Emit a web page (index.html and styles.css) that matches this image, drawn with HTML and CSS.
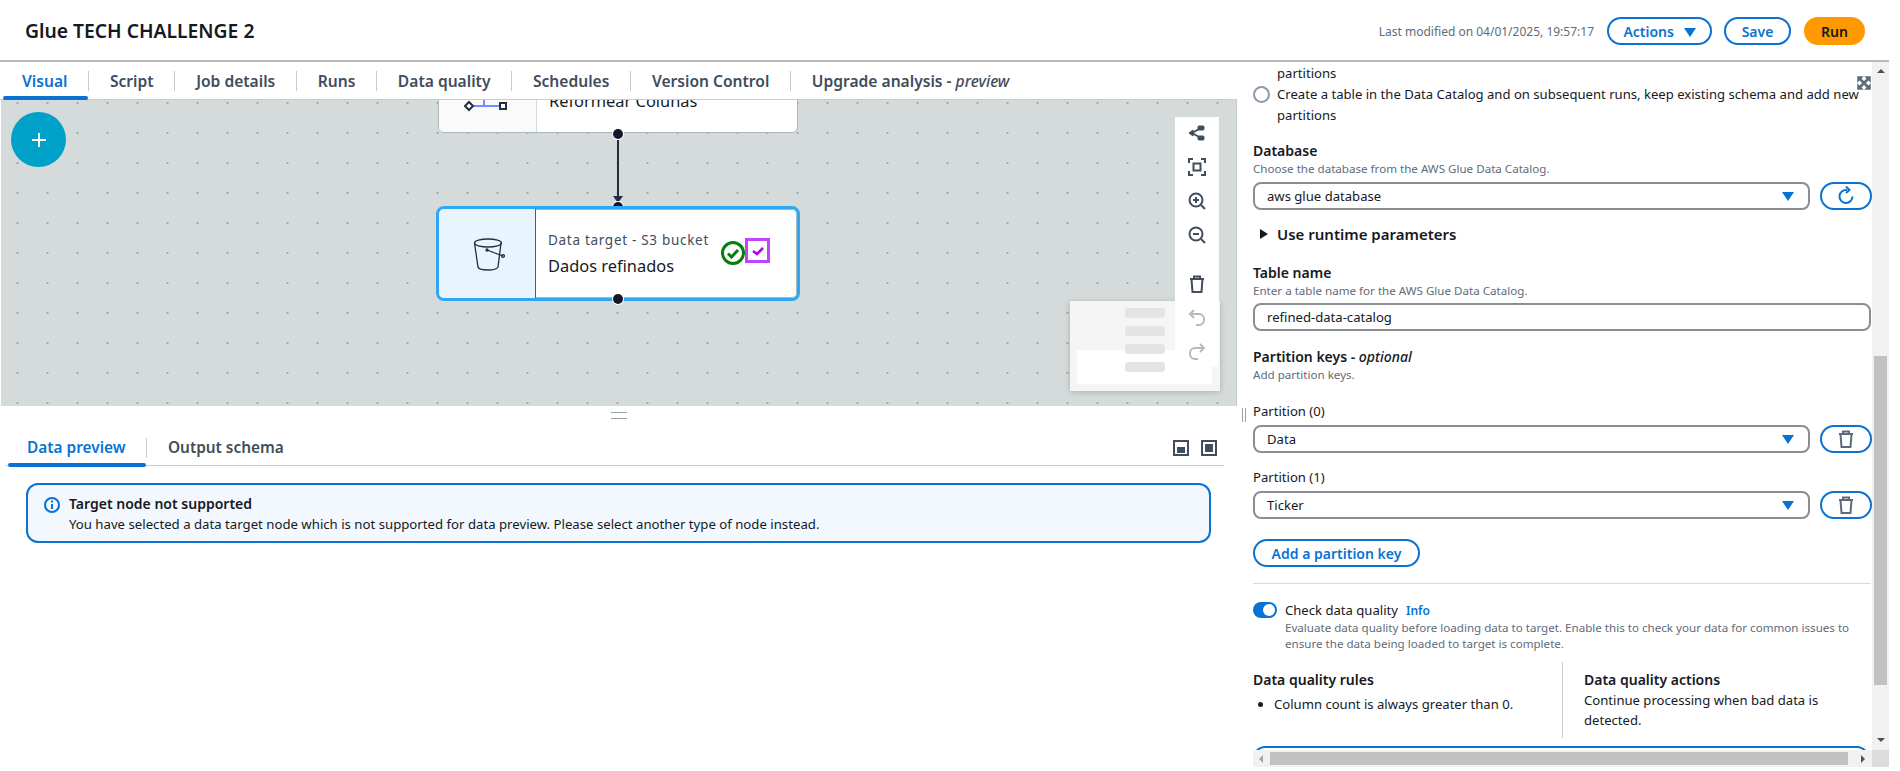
FILE: index.html
```html
<!DOCTYPE html>
<html lang="en">
<head>
    <meta charset="UTF-8">
    <title>Glue TECH CHALLENGE 2</title>
    <link rel="stylesheet" href="styles.css">
</head>
<body>
    <header class="topbar">
        <h1 class="job-title">Glue TECH CHALLENGE 2</h1>
        <div class="top-actions">
            <span class="modified">Last modified on 04/01/2025, 19:57:17</span>
            <button class="btn btn-actions">Actions <span class="caret-down"></span></button>
            <button class="btn btn-save">Save</button>
            <button class="btn btn-run">Run</button>
        </div>
    </header>

    <main class="workspace">
        <section class="left">
            <nav class="tabs">
                <a class="tab active">Visual</a>
                <a class="tab">Script</a>
                <a class="tab">Job details</a>
                <a class="tab">Runs</a>
                <a class="tab">Data quality</a>
                <a class="tab">Schedules</a>
                <a class="tab">Version Control</a>
                <a class="tab last">Upgrade analysis - <em>preview</em></a>
            </nav>

            <div class="canvas">
                <button class="add-node">
                    <svg width="20" height="20" viewBox="0 0 20 20"><path d="M10 3v14M3 10h14" stroke="#fff" stroke-width="2"/></svg>
                </button>

                <div class="node node-prev">
                    <div class="node-icon">
                        <svg width="44" height="20" viewBox="0 0 44 20"><path d="M8 11h30M20 5v6" stroke="#6f8fff" stroke-width="2" fill="none"/><path d="M5 7l4 4-4 4-4-4z" fill="#fff" stroke="#232f3e" stroke-width="2"/><rect x="36" y="8" width="6" height="6" fill="#fff" stroke="#232f3e" stroke-width="2"/></svg>
                    </div>
                    <div class="node-text"><div class="node-name">Reformear Colunas</div></div>
                </div>
                <span class="port port-a"></span>
                <svg class="edge" width="12" height="64" viewBox="0 0 12 64"><path d="M6 0v56" stroke="#232f3e" stroke-width="2"/><path d="M1 56h10l-5 7z" fill="#232f3e"/></svg>
                <span class="port port-c"></span>

                <div class="node node-selected">
                    <div class="node-icon">
                        <svg class="bucket" width="32" height="34" viewBox="0 0 32 34" fill="none" stroke="#232f3e" stroke-width="1.3"><ellipse cx="15" cy="6" rx="13.5" ry="4"/><path d="M1.5 6l3.5 24c.5 2 4 3 10 3s9-1 10-3l3-24"/><path d="M14 13l16 6" /><circle cx="14" cy="13" r="1"/><circle cx="30" cy="19" r="1.4"/></svg>
                    </div>
                    <div class="node-text">
                        <div class="node-type">Data target - S3 bucket</div>
                        <div class="node-name">Dados refinados</div>
                    </div>
                    <svg class="node-ok" width="26" height="26" viewBox="0 0 26 26" fill="none" stroke="#037f0c"><circle cx="13" cy="13" r="10.5" stroke-width="3"/><path d="M8 13.5l3.5 3.5 6.5-7" stroke-width="3"/></svg>
                    <span class="node-dq">
                        <svg width="14" height="12" viewBox="0 0 14 12" fill="none"><path d="M2 6l4 3 6-6" stroke="#b600f5" stroke-width="2.6"/></svg>
                    </span>
                </div>
                <span class="port port-b"></span>

                <div class="minimap">
                    <div class="minimap-view"></div>
                    <span class="mini-bar bar-1"></span>
                    <span class="mini-bar bar-2"></span>
                    <span class="mini-bar bar-3"></span>
                    <span class="mini-bar bar-4"></span>
                </div>

                <div class="tools">
                    <svg width="18" height="18" viewBox="0 0 18 18" fill="#414d5c" stroke="#414d5c"><path d="M4 9l9-5M4 9l9 5" stroke-width="2"/><path d="M1 9l4-3v6z"/><rect x="10" y="2" width="6" height="4" rx="1"/><rect x="10" y="12" width="6" height="4" rx="1"/></svg>
                    <svg width="18" height="18" viewBox="0 0 18 18" fill="none" stroke="#414d5c" stroke-width="2"><path d="M1 5V1h4M13 1h4v4M17 13v4h-4M5 17H1v-4"/><rect x="5.500" y="5.500" width="7" height="7"/></svg>
                    <svg width="18" height="18" viewBox="0 0 18 18" fill="none" stroke="#414d5c" stroke-width="2"><circle cx="8" cy="8" r="6.500"/><path d="M13 13l4 4M5 8h6M8 5v6"/></svg>
                    <svg width="18" height="18" viewBox="0 0 18 18" fill="none" stroke="#414d5c" stroke-width="2"><circle cx="8" cy="8" r="6.500"/><path d="M13 13l4 4M5 8h6"/></svg>
                    <svg class="tool-gap" width="18" height="18" viewBox="0 0 18 18" fill="none" stroke="#414d5c" stroke-width="2"><path d="M2 4h14M6 4V1.500h6V4M3.500 4l1 13h9l1-13"/></svg>
                    <svg width="18" height="18" viewBox="0 0 18 18" fill="none" stroke="#b4b9c0" stroke-width="2"><path d="M6 1L2 5l4 4M2 5h9a5 5 0 0 1 5 5v1a5 5 0 0 1-5 5H8"/></svg>
                    <svg width="18" height="18" viewBox="0 0 18 18" fill="none" stroke="#b4b9c0" stroke-width="2"><path d="M12 1l4 4-4 4M16 5H7a5 5 0 0 0-5 5v1a5 5 0 0 0 5 5h3"/></svg>
                </div>
            </div>

            <div class="resize-h"></div>

            <div class="preview">
                <div class="preview-tabs">
                    <a class="tab active">Data preview</a>
                    <a class="tab last">Output schema</a>
                    <div class="panel-btns">
                        <span class="panel-btn"><span class="fill-bottom"></span></span>
                        <span class="panel-btn"><span class="fill-full"></span></span>
                    </div>
                </div>
                <div class="alert">
                    <svg width="16" height="16" viewBox="0 0 16 16" fill="none" stroke="#0972d3" stroke-width="2"><circle cx="8" cy="8" r="7"/><path d="M8 7v5M8 3.500v2"/></svg>
                    <div>
                        <div class="alert-title">Target node not supported</div>
                        <div class="alert-body">You have selected a data target node which is not supported for data preview. Please select another type of node instead.</div>
                    </div>
                </div>
            </div>
        </section>

        <aside class="right">
            <span class="resize-v"></span>
            <div class="props">
                <svg class="expand" width="14" height="14" viewBox="0 0 14 14" fill="#5f6b7a" stroke="#5f6b7a" stroke-width="1.500"><path d="M1 5V1h4zM9 1h4v4zM13 9v4H9zM5 13H1V9z"/><path d="M3 3l8 8M11 3l-8 8" fill="none" stroke-width="2.500"/></svg>
                <div class="props-body">
                    <div class="radio-text first-line">partitions</div>
                    <label class="radio-row">
                        <span class="radio"></span>
                        <span class="radio-text">Create a table in the Data Catalog and on subsequent runs, keep existing schema and add new partitions</span>
                    </label>

                    <div class="label mt-15">Database</div>
                    <div class="desc">Choose the database from the AWS Glue Data Catalog.</div>
                    <div class="field-row mt-5">
                        <div class="select">aws glue database<span class="select-caret"></span></div>
                        <button class="icon-btn">
                            <svg width="20" height="20" viewBox="0 0 20 20" fill="none" stroke="#0972d3" stroke-width="2"><path d="M16.500 10.500A6.500 6.500 0 1 1 11 4M10 0.500l3.500 3.500-3.500 3" /></svg>
                        </button>
                    </div>

                    <div class="expander"><span class="caret-right"></span>Use runtime parameters</div>

                    <div class="label mt-19">Table name</div>
                    <div class="desc">Enter a table name for the AWS Glue Data Catalog.</div>
                    <div class="input mt-4">refined-data-catalog</div>

                    <div class="label mt-16">Partition keys - <em>optional</em></div>
                    <div class="desc">Add partition keys.</div>

                    <div class="sub-label mt-18">Partition (0)</div>
                    <div class="field-row mt-4">
                        <div class="select">Data<span class="select-caret"></span></div>
                        <button class="icon-btn">
                            <svg width="18" height="18" viewBox="0 0 18 18" fill="none" stroke="#5f6b7a" stroke-width="2"><path d="M2 4h14M6 4V1.500h6V4M3.500 4l1 13h9l1-13"/></svg>
                        </button>
                    </div>
                    <div class="sub-label mt-14">Partition (1)</div>
                    <div class="field-row mt-4">
                        <div class="select">Ticker<span class="select-caret"></span></div>
                        <button class="icon-btn">
                            <svg width="18" height="18" viewBox="0 0 18 18" fill="none" stroke="#5f6b7a" stroke-width="2"><path d="M2 4h14M6 4V1.500h6V4M3.500 4l1 13h9l1-13"/></svg>
                        </button>
                    </div>
                    <button class="btn btn-add">Add a partition key</button>

                    <hr class="divider">

                    <div class="toggle-row">
                        <span class="toggle"></span>
                        <span class="toggle-label">Check data quality</span>
                        <a class="info">Info</a>
                    </div>
                    <div class="desc toggle-desc">Evaluate data quality before loading data to target. Enable this to check your data for common issues to ensure the data being loaded to target is complete.</div>

                    <div class="dq-cols">
                        <div class="dq-col">
                            <div class="label">Data quality rules</div>
                            <ul class="dq-list"><li>Column count is always greater than 0.</li></ul>
                        </div>
                        <div class="dq-col dq-actions">
                            <div class="label">Data quality actions</div>
                            <div class="dq-text">Continue processing when bad data is detected.</div>
                        </div>
                    </div>
                    <div class="cut-box"></div>
                </div>
                <div class="hbar">
                    <span class="arrow-left"></span>
                    <span class="hthumb"></span>
                    <span class="arrow-right"></span>
                </div>
            </div>
            <div class="vbar">
                <span class="arrow-up"></span>
                <span class="vthumb"></span>
                <span class="arrow-down"></span>
                <span class="corner"></span>
            </div>
        </aside>
    </main>
</body>
</html>
```

FILE: styles.css
```css
* {
    box-sizing: border-box;
}
body {
    margin: 0;
    width: 1889px;
    height: 767px;
    font-family: "Noto Sans", sans-serif;
    font-size: 14px;
    color: #16191f;
    background-color: #ffffff;
    overflow: hidden;
    display: flex;
    flex-direction: column;
}
.topbar {
    height: 62px;
    flex: none;
    display: flex;
    align-items: center;
    justify-content: space-between;
    padding: 0 24px 0 25px;
    border-bottom: 2px solid #b4bcbc;
}
.job-title {
    margin: 0;
    font-size: 19.300px;
    font-weight: 600;
    color: #16191f;
}
.top-actions {
    display: flex;
    align-items: center;
    margin-top: 2px;
}
.modified {
    font-size: 12px;
    color: #5f6b7a;
    margin-right: 13px;
}
.btn {
    font-family: inherit;
    font-size: 14px;
    font-weight: 600;
    height: 28px;
    padding: 0;
    border: 2px solid #0972d3;
    border-radius: 14px;
    background-color: #ffffff;
    color: #0972d3;
}
.btn-actions {
    width: 105px;
}
.caret-down {
    display: inline-block;
    margin-left: 6px;
    border-left: 6px solid transparent;
    border-right: 6px solid transparent;
    border-top: 9px solid #0972d3;
}
.btn-save {
    width: 67px;
    margin-left: 12px;
}
.btn-run {
    width: 61px;
    margin-left: 13px;
    background-color: #ff9900;
    border-color: #ff9900;
    color: #16191f;
}
.workspace {
    flex: 1;
    min-height: 0;
    display: flex;
}
.left {
    width: 1237px;
    flex: none;
    display: flex;
    flex-direction: column;
}
.tabs {
    height: 38px;
    flex: none;
    display: flex;
    align-items: center;
    padding: 0 0 0 3px;
    border-bottom: 1px solid #c6cbd0;
    background-color: #ffffff;
    position: relative;
}
.tab {
    font-size: 15.600px;
    font-weight: 600;
    color: #414d5c;
    padding: 0 20.500px 0 21px;
    height: 20px;
    line-height: 20px;
    border-right: 1px solid #c6cbd0;
    position: relative;
}
.tab:first-child {
    padding-left: 19px;
}
.tab.last {
    border-right: none;
}
.tab em {
    font-weight: 500;
}
.tab.active {
    color: #0972d3;
}
.tab.active::after {
    content: "";
    position: absolute;
    left: 0;
    right: 0;
    top: 25px;
    height: 4px;
    background-color: #0972d3;
    border-radius: 2px;
}
.canvas {
    height: 306px;
    flex: none;
    position: relative;
    overflow: hidden;
    margin-left: 1px;
    background-color: #d5dbdb;
    background-image: radial-gradient(circle, #a3adad 0.8px, transparent 1.100px);
    background-size: 30px 30px;
    background-position: 1.500px -12px;
    border-right: 1px solid #c6cbd0;
}
.add-node {
    position: absolute;
    left: 10px;
    top: 12px;
    width: 55px;
    height: 55px;
    border: none;
    border-radius: 50%;
    background-color: #00a1c9;
    display: flex;
    align-items: center;
    justify-content: center;
}
.node {
    position: absolute;
    display: flex;
    background-color: #ffffff;
    overflow: hidden;
}
.node-prev {
    left: 437px;
    top: -60px;
    width: 360px;
    height: 93px;
    border: 1px solid #aab7b8;
    border-radius: 6px;
}
.node-selected {
    left: 435px;
    top: 106px;
    width: 364px;
    height: 95px;
    border: 3px solid #2ea7f5;
    border-radius: 8px;
    align-items: center;
    box-shadow: inset 0 0 0 1px #aab7b8;
}
.node-icon {
    width: 97px;
    align-self: stretch;
    flex: none;
    display: flex;
    align-items: center;
    justify-content: center;
    background-color: #fafafa;
    border-right: 1px solid #d5dbdb;
}
.node-prev .node-icon {
    width: 98px;
    align-items: flex-start;
    padding-top: 54px;
    padding-right: 4px;
}
.node-selected .node-icon {
    background-color: #e8f5fe;
    border-right-color: #0073bb;
}
.bucket {
    margin-left: 3px;
}
.node-text {
    padding-left: 12px;
}
.node-prev .node-text {
    padding-top: 49px;
}
.node-type {
    font-size: 13.500px;
    letter-spacing: 0.700px;
    color: #414d5c;
    line-height: 18px;
}
.node-name {
    font-size: 16.400px;
    line-height: 22px;
    color: #16191f;
}
.node-selected .node-name {
    margin-top: 6px;
}
.node-ok {
    position: absolute;
    left: 281px;
    top: 31px;
}
.node-dq {
    position: absolute;
    left: 306px;
    top: 29px;
    width: 25px;
    height: 25px;
    border: 3px solid #c142ff;
    display: flex;
    align-items: center;
    justify-content: center;
}
.port {
    position: absolute;
    left: 612px;
    width: 10px;
    height: 10px;
    border-radius: 50%;
    background-color: #16162d;
    box-shadow: 0 0 0 1px #ffffff;
}
.port-a {
    top: 29px;
}
.port-b {
    top: 194px;
}
.port-c {
    top: 102px;
}
.edge {
    position: absolute;
    left: 611px;
    top: 40px;
}
.minimap {
    position: absolute;
    left: 1069px;
    top: 201px;
    width: 150px;
    height: 90px;
    background-color: #f5f5f5;
    box-shadow: 0 1px 6px rgba(0, 0, 0, 0.2);
}
.minimap-view {
    position: absolute;
    left: 7px;
    top: 49px;
    width: 135px;
    height: 34px;
    background-color: #ffffff;
}
.mini-bar {
    position: absolute;
    left: 55px;
    width: 40px;
    height: 10px;
    border-radius: 3px;
    background-color: #e4e4e4;
}
.bar-1 { top: 7px; }
.bar-2 { top: 25px; }
.bar-3 { top: 43px; }
.bar-4 { top: 61px; }
.tools {
    position: absolute;
    left: 1174px;
    top: 17px;
    width: 44px;
    height: 250px;
    background-color: #ffffff;
    display: flex;
    flex-direction: column;
    align-items: center;
    padding-top: 7px;
    gap: 16px;
}
.tool-gap {
    margin-top: 15px;
}
.resize-h {
    position: relative;
    height: 24px;
    flex: none;
}
.resize-h::after {
    content: "";
    position: absolute;
    left: 611px;
    top: 6px;
    width: 16px;
    height: 5px;
    border-top: 1px solid #9aa3a3;
    border-bottom: 1px solid #9aa3a3;
}
.preview {
    padding: 0 13px 0 6px;
    flex: 1;
}
.preview-tabs {
    display: flex;
    align-items: center;
    height: 36px;
    padding: 0 0 0 2px;
    border-bottom: 1px solid #c6cbd0;
}
.preview-tabs .tab {
    font-size: 15.400px;
}
.panel-btns {
    margin-left: auto;
    display: flex;
    gap: 12px;
    padding-right: 7px;
}
.panel-btn {
    width: 16px;
    height: 16px;
    border: 2px solid #414d5c;
    position: relative;
    display: block;
}
.fill-bottom {
    position: absolute;
    left: 2px;
    right: 2px;
    bottom: 1px;
    height: 6px;
    background-color: #414d5c;
}
.fill-full {
    position: absolute;
    left: 2px;
    right: 2px;
    top: 2px;
    bottom: 2px;
    background-color: #414d5c;
}
.alert {
    margin: 17px 0 0 20px;
    width: 1185px;
    height: 60px;
    border: 2px solid #0972d3;
    border-radius: 12px;
    background-color: #f2f8fd;
    display: flex;
    gap: 9px;
    padding: 9px 16px;
}
.alert svg {
    margin-top: 3px;
    flex: none;
}
.alert-title {
    font-size: 14px;
    font-weight: 600;
    line-height: 20px;
    color: #16191f;
}
.alert-body {
    font-size: 13.200px;
    line-height: 20px;
    color: #16191f;
}
.right {
    flex: 1;
    min-width: 0;
    display: flex;
    position: relative;
}
.resize-v {
    position: absolute;
    left: 5px;
    top: 346px;
    width: 4px;
    height: 14px;
    border-left: 1px solid #9aa3a3;
    border-right: 1px solid #9aa3a3;
}
.props {
    flex: 1;
    min-width: 0;
    display: flex;
    flex-direction: column;
    position: relative;
}
.expand {
    position: absolute;
    right: 1px;
    top: 14px;
}
.props-body {
    flex: 1;
    min-height: 0;
    overflow: hidden;
    padding: 1px 0 0 16px;
}
.first-line {
    margin-left: 24px;
}
.radio-row {
    display: flex;
    align-items: flex-start;
    gap: 7px;
    margin-right: 4px;
}
.radio {
    width: 17px;
    height: 17px;
    margin-top: 2px;
    flex: none;
    border: 2px solid #8d99a8;
    border-radius: 50%;
}
.radio-text {
    font-size: 13.100px;
    line-height: 21px;
    color: #16191f;
}
.label {
    font-size: 14px;
    font-weight: 600;
    line-height: 20px;
    color: #16191f;
}
.label em {
    font-weight: 500;
}
.sub-label {
    font-size: 13.100px;
    line-height: 20px;
    color: #16191f;
}
.desc {
    font-size: 11.600px;
    line-height: 16px;
    color: #5f6b7a;
}
.mt-4 { margin-top: 4px; }
.mt-5 { margin-top: 5px; }
.mt-14 { margin-top: 14px; }
.mt-15 { margin-top: 15px; }
.mt-16 { margin-top: 16px; }
.mt-18 { margin-top: 18px; }
.mt-19 { margin-top: 19px; }
.field-row {
    display: flex;
    gap: 10px;
}
.select, .input {
    height: 28px;
    line-height: 24px;
    border: 2px solid #8c8c94;
    border-radius: 8px;
    padding: 0 12px;
    font-size: 13.100px;
    color: #16191f;
    background-color: #ffffff;
}
.select {
    width: 557px;
    position: relative;
}
.input {
    width: 618px;
}
.select-caret {
    position: absolute;
    right: 14px;
    top: 8px;
    border-left: 6px solid transparent;
    border-right: 6px solid transparent;
    border-top: 9px solid #0972d3;
}
.icon-btn {
    width: 52px;
    height: 28px;
    padding: 0;
    border: 2px solid #0972d3;
    border-radius: 14px;
    background-color: #ffffff;
    display: flex;
    align-items: center;
    justify-content: center;
}
.expander {
    margin-top: 14px;
    font-size: 15px;
    font-weight: 600;
    line-height: 20px;
    display: flex;
    align-items: center;
    padding-left: 7px;
}
.caret-right {
    margin-right: 9px;
    border-top: 5px solid transparent;
    border-bottom: 5px solid transparent;
    border-left: 8px solid #16191f;
}
.btn-add {
    display: block;
    width: 167px;
    margin-top: 20px;
    font-size: 14px;
}
.divider {
    margin: 16px 0 0;
    width: 618px;
    border: none;
    border-top: 1px solid #d5dbdb;
}
.toggle-row {
    margin-top: 16px;
    height: 20px;
    display: flex;
    align-items: center;
}
.toggle {
    width: 24px;
    height: 16px;
    border-radius: 8px;
    background-color: #0972d3;
    position: relative;
}
.toggle::after {
    content: "";
    position: absolute;
    right: 2px;
    top: 2px;
    width: 12px;
    height: 12px;
    border-radius: 50%;
    background-color: #ffffff;
}
.toggle-label {
    margin-left: 8px;
    font-size: 13.100px;
}
.info {
    margin-left: 8px;
    font-size: 12px;
    font-weight: 600;
    color: #0972d3;
}
.toggle-desc {
    margin-left: 32px;
    width: 575px;
}
.dq-cols {
    margin-top: 10px;
    width: 618px;
    display: grid;
    grid-template-columns: 309px 1fr;
    height: 76px;
}
.dq-col {
    padding-top: 8px;
}
.dq-actions {
    border-left: 1px solid #c6cbd0;
    padding-left: 21px;
    padding-right: 40px;
}
.dq-list {
    margin: 4px 0 0;
    padding-left: 21px;
    font-size: 13.100px;
    line-height: 20px;
}
.dq-text {
    font-size: 13.100px;
    line-height: 20px;
}
.cut-box {
    margin-top: 8px;
    width: 616px;
    height: 40px;
    border: 2px solid #0972d3;
    border-radius: 12px;
}
.hbar {
    height: 17px;
    flex: none;
    margin-left: 16px;
    background-color: #f1f1f1;
    display: flex;
    align-items: center;
}
.hthumb {
    width: 578px;
    height: 13px;
    margin-left: 7px;
    background-color: #c1c1c1;
}
.arrow-left {
    margin-left: 6px;
    border-top: 4px solid transparent;
    border-bottom: 4px solid transparent;
    border-right: 4px solid #a3a3a3;
}
.arrow-right {
    margin-left: 13px;
    border-top: 4px solid transparent;
    border-bottom: 4px solid transparent;
    border-left: 4px solid #505050;
}
.vbar {
    width: 17px;
    flex: none;
    position: relative;
    background-color: #f1f1f1;
    display: flex;
    flex-direction: column;
    align-items: center;
}
.arrow-up {
    margin-top: 7px;
    border-left: 4px solid transparent;
    border-right: 4px solid transparent;
    border-bottom: 4px solid #505050;
}
.vthumb {
    position: absolute;
    left: 2px;
    top: 294px;
    width: 13px;
    height: 329px;
    background-color: #c1c1c1;
}
.arrow-down {
    position: absolute;
    top: 676px;
    border-left: 4px solid transparent;
    border-right: 4px solid transparent;
    border-top: 4px solid #505050;
}
.corner {
    position: absolute;
    left: 0;
    right: 0;
    bottom: 0;
    height: 17px;
    background-color: #dcdcdc;
}
```
